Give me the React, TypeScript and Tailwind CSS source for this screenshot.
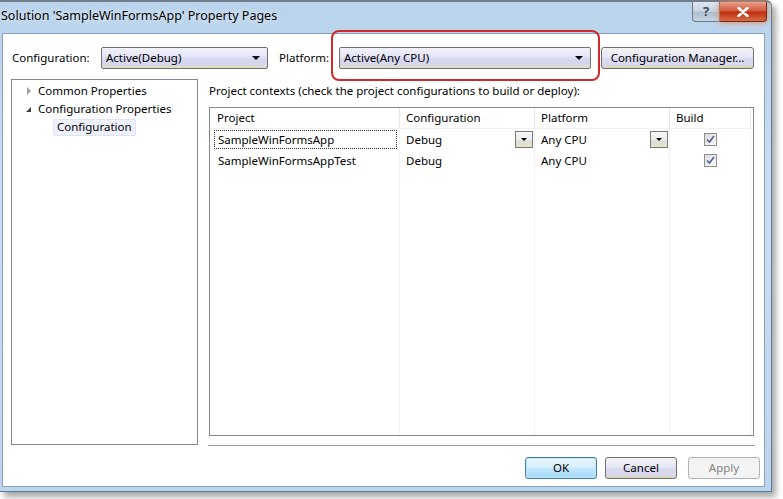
import React from "react";

const font = "font-['Segoe_UI','Noto_Sans',sans-serif]";

const Combo = ({ label, width }: { label: string; width: string }) => (
  <div
    className={`${width} h-[22px] flex items-center justify-between pl-[4px] pr-[7px] border border-[#707070] rounded-[2px] bg-[linear-gradient(to_bottom,#f2f2fb_0%,#e4e4f6_45%,#d6d6f1_55%,#d6d6ef_80%,#e2dfc0_100%)]`}
  >
    <span className="text-black leading-none">{label}</span>
    <span className="w-0 h-0 border-l-[4px] border-r-[4px] border-t-[4px] border-l-transparent border-r-transparent border-t-black" />
  </div>
);

const CellArrow = () => (
  <div className="w-[18px] h-[17px] border border-[#7a7a7a] flex items-center justify-center bg-[linear-gradient(to_bottom,#f7f7f7_0%,#ececec_50%,#dedede_55%,#e4e2c6_100%)]">
    <span className="w-0 h-0 border-l-[3.5px] border-r-[3.5px] border-t-[3.5px] border-l-transparent border-r-transparent border-t-black" />
  </div>
);

const Check = () => (
  <div className="w-[13px] h-[13px] border border-[#8e8f8f] bg-[linear-gradient(to_bottom_right,#dcdcdc,#fbfbfb)] flex items-center justify-center">
    <svg width="9" height="9" viewBox="0 0 9 9">
      <path d="M1 4.5 L3.5 7 L8 1" stroke="#4a5f97" strokeWidth="1.6" fill="none" />
    </svg>
  </div>
);

const Button = ({ label, kind }: { label: string; kind: "default" | "normal" | "disabled" }) => {
  const style =
    kind === "default"
      ? "border-[#3c7fb1] bg-[linear-gradient(to_bottom,#eaf6fd_0%,#d9f0fc_45%,#bee6fd_55%,#a7d9f5_100%)] text-black shadow-[inset_0_0_0_1px_#bfe7fa]"
      : kind === "normal"
      ? "border-[#707070] bg-[linear-gradient(to_bottom,#f2f2f2_0%,#e8e8f6_45%,#d8d8f0_55%,#d8d8ee_82%,#d9d6b4_100%)] text-black"
      : "border-[#adb2b5] bg-[#f4f4f4] text-[#838383]";
  return (
    <div className={`w-[72px] h-[22px] border rounded-[3px] flex items-center justify-center ${style}`}>
      {label}
    </div>
  );
};

const cols = [
  { name: "Project", w: "w-[190px]" },
  { name: "Configuration", w: "w-[135px]" },
  { name: "Platform", w: "w-[135px]" },
  { name: "Build", w: "w-[81px]" },
];

const rows = [
  { project: "SampleWinFormsApp", focus: true },
  { project: "SampleWinFormsAppTest", focus: false },
];

export default function App() {
  return (
    <div className={`w-[783px] h-[499px] bg-white relative overflow-hidden ${font}`}>
      <div className="w-[772px] h-[492px] flex flex-col bg-[linear-gradient(to_bottom,#b9d3ec,#c8def3_40%,#bcd5ee)] border-t-[2px] border-t-[#6f7d8c] border-r border-r-[#5f7b98] border-b border-b-[#5f7b98] shadow-[4px_5px_6px_rgba(0,0,0,0.35)] rounded-tr-[6px]">
        {/* title bar */}
        <div className="h-[31px] flex items-start">
          <div className="pl-[1px] pt-[5px] text-[12.5px] text-black [text-shadow:0_0_6px_#ffffff]">
            Solution 'SampleWinFormsApp' Property Pages
          </div>
          <div className="ml-auto mr-[4px] flex">
            <div className="w-[28px] h-[20px] border border-[#6b7a89] border-t-0 rounded-bl-[4px] bg-[linear-gradient(to_bottom,#dfe7ef,#c4d1de_50%,#aebfcf_55%,#c7d6e4)] flex items-center justify-center text-[13px] font-bold text-[#3e4d5d]">
              ?
            </div>
            <div className="w-[47px] h-[20px] border border-[#6b2b1d] border-t-0 border-l-0 rounded-br-[4px] bg-[linear-gradient(to_bottom,#e9a08c,#d45a3f_45%,#c0300f_55%,#d86c45)] flex items-center justify-center shadow-[0_0_6px_#f07a3a]">
              <svg width="12" height="10" viewBox="0 0 12 10">
                <path d="M1.5 1 L10.5 9 M10.5 1 L1.5 9" stroke="#ffffff" strokeWidth="2.6" strokeLinecap="round" />
              </svg>
            </div>
          </div>
        </div>

        {/* client area */}
        <div className="flex-1 ml-[2px] mr-[6px] mb-[4px] bg-white border border-[#8aa0ba] flex flex-col text-[11.5px] text-black">
          {/* configuration row */}
          <div className="mt-[13px] h-[22px] flex items-center pl-[9px]">
            <span className="w-[89px]">Configuration:</span>
            <Combo label="Active(Debug)" width="w-[167px]" />
            <span className="ml-[11px] w-[60px]">Platform:</span>
            <Combo label="Active(Any CPU)" width="w-[252px]" />
            <div className="ml-[10px] w-[153px] h-[22px] border border-[#707070] rounded-[3px] flex items-center justify-center bg-[linear-gradient(to_bottom,#f2f2f2_0%,#e8e8f6_45%,#d8d8f0_55%,#d8d8ee_82%,#d9d6b4_100%)]">
              Configuration Manager...
            </div>
          </div>

          {/* main area */}
          <div className="mt-[10px] flex pl-[8px]">
            <div className="w-[187px] h-[366px] border border-[#828790] pt-[2px]">
              <div className="h-[18px] flex items-center pl-[15px]">
                <span className="w-0 h-0 border-t-[4px] border-b-[4px] border-l-[4px] border-t-transparent border-b-transparent border-l-[#a0a0a0] mr-[7px]" />
                <span>Common Properties</span>
              </div>
              <div className="h-[18px] flex items-center pl-[14px]">
                <span className="w-0 h-0 border-b-[5px] border-l-[5px] border-l-transparent border-b-[#3a3a3a] mr-[7px]" />
                <span>Configuration Properties</span>
              </div>
              <div className="h-[18px] flex items-center pl-[41px]">
                <span className="px-[3px] h-[17px] flex items-center bg-[#eef0fb] border border-[#dfe3f3] rounded-[2px]">
                  Configuration
                </span>
              </div>
            </div>

            <div className="ml-[11px] w-[545px] flex flex-col">
              <div className="h-[28px] pt-[3px]">
                Project contexts (check the project configurations to build or deploy):
              </div>
              <div className="h-[329px] border border-[#828790] flex flex-col">
                <div className="h-[21px] flex border-b border-[#f0f0f0]">
                  {cols.map((c, i) => (
                    <div
                      key={c.name}
                      className={`${c.w} flex items-center ${i === 0 ? "pl-[7px]" : "pl-[6px]"} border-r border-[#e3e6eb]`}
                    >
                      {c.name}
                    </div>
                  ))}
                </div>
                <div className="flex-1 flex">
                  <div className="w-[190px] border-r border-[#f1f3f7]">
                    {rows.map((r) => (
                      <div key={r.project} className="h-[21px] flex items-center pl-[4px]">
                        <span
                          className={`h-[19px] flex items-center pl-[3px] ${
                            r.focus ? "w-[183px] border border-dotted border-[#303030]" : "border border-transparent"
                          }`}
                        >
                          {r.project}
                        </span>
                      </div>
                    ))}
                  </div>
                  <div className="w-[135px] border-r border-[#f1f3f7]">
                    {rows.map((r) => (
                      <div key={r.project} className="h-[21px] flex items-center justify-between pl-[6px] pr-[1px]">
                        <span>Debug</span>
                        {r.focus && <CellArrow />}
                      </div>
                    ))}
                  </div>
                  <div className="w-[135px] border-r border-[#f1f3f7]">
                    {rows.map((r) => (
                      <div key={r.project} className="h-[21px] flex items-center justify-between pl-[6px] pr-[1px]">
                        <span>Any CPU</span>
                        {r.focus && <CellArrow />}
                      </div>
                    ))}
                  </div>
                  <div className="w-[81px] border-r border-[#f1f3f7]">
                    {rows.map((r) => (
                      <div key={r.project} className="h-[21px] flex items-center pl-[34px]">
                        <Check />
                      </div>
                    ))}
                  </div>
                </div>
              </div>
            </div>
          </div>

          <div className="mt-0 ml-[205px] w-[547px] h-px bg-[#a0a0a0]" />

          {/* buttons */}
          <div className="mt-[11px] flex pl-[522px] gap-[8px]">
            <Button label="OK" kind="default" />
            <Button label="Cancel" kind="normal" />
            <div className="ml-[3px]">
              <Button label="Apply" kind="disabled" />
            </div>
          </div>
        </div>
      </div>

      {/* highlight annotation */}
      <div className="absolute left-[331px] top-[30px] w-[269px] h-[51px] border-2 border-[#d22a2a] rounded-[8px]" />
    </div>
  );
}
